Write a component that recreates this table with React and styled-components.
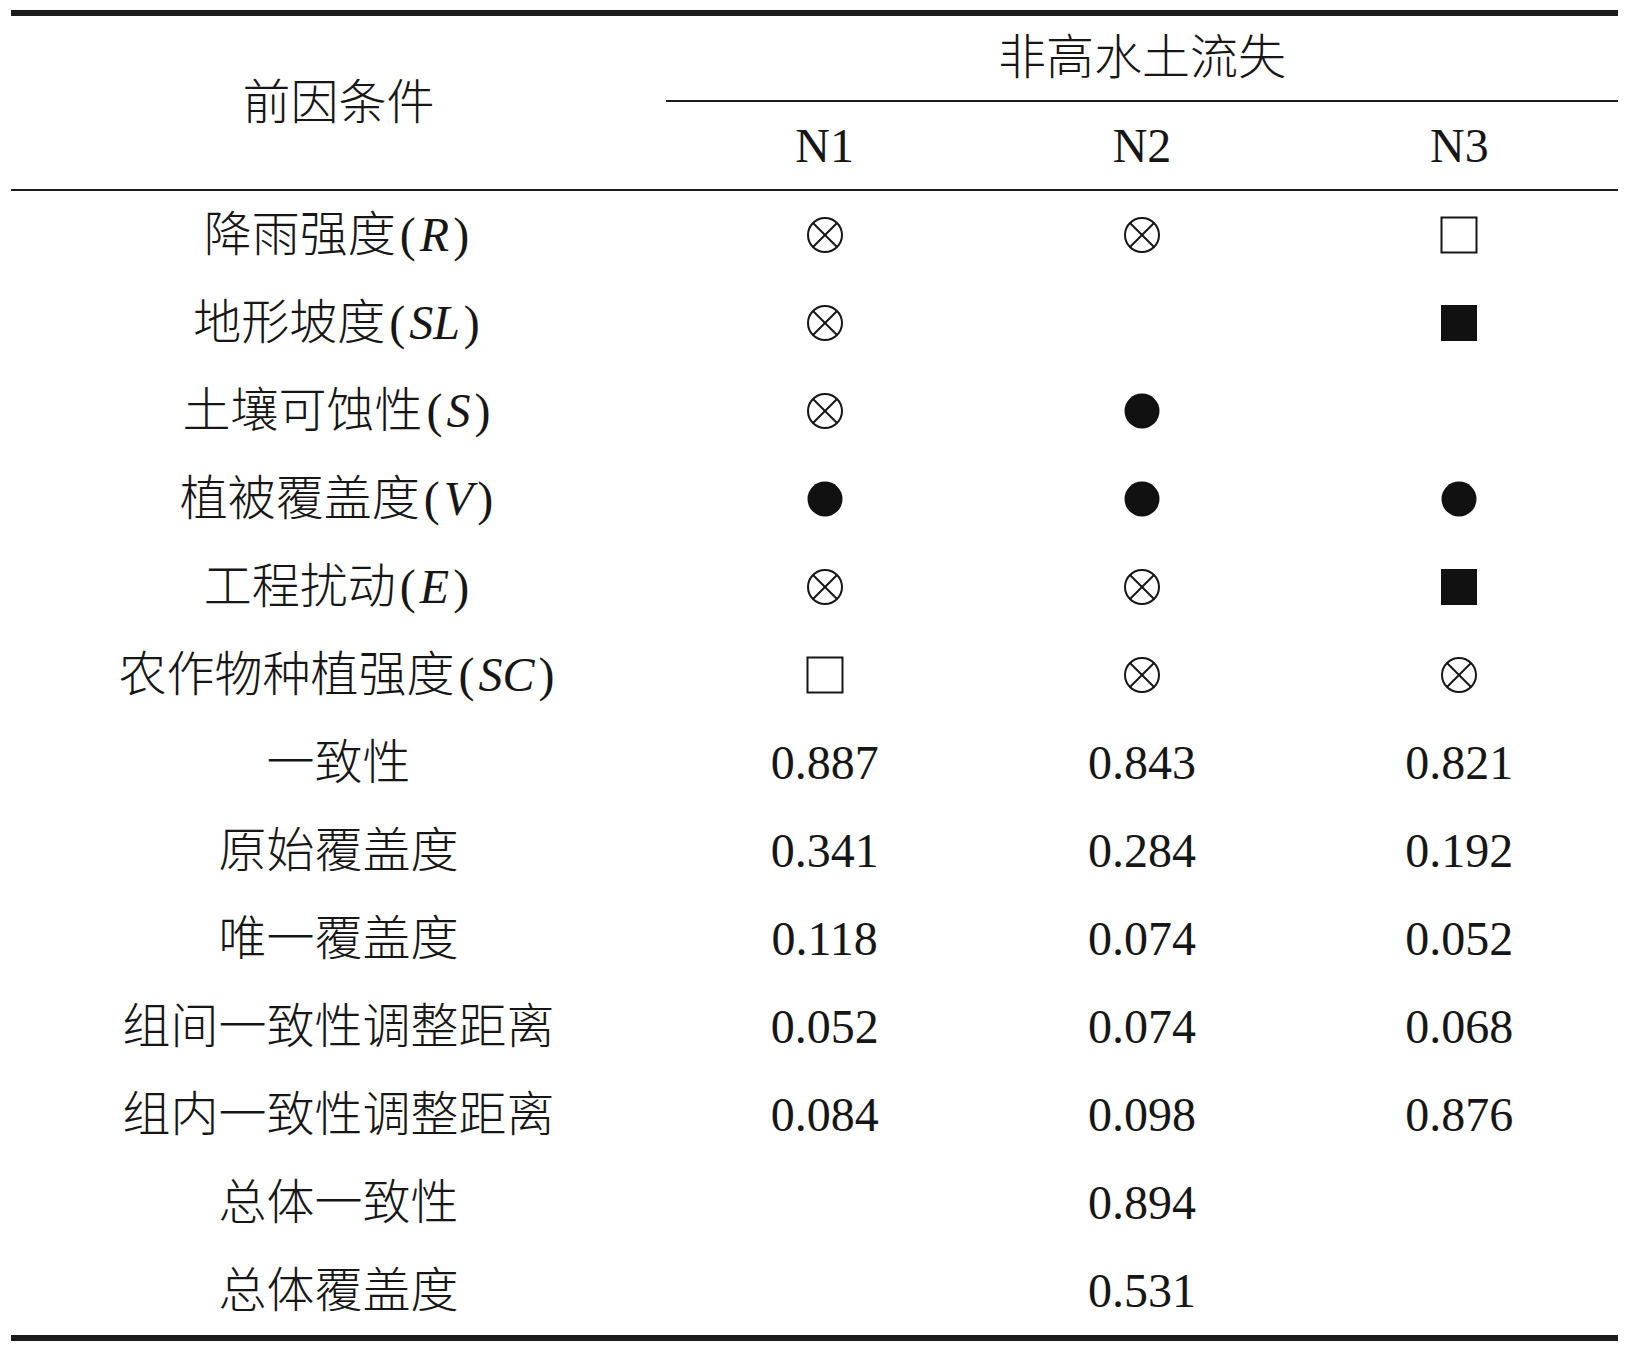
import React from 'react';
import styled, { createGlobalStyle } from 'styled-components';

const GlobalStyle = createGlobalStyle`
  html, body { margin: 0; padding: 0; background: #ffffff; }
  body {
    font-family: "Liberation Serif", "Noto Sans CJK SC", serif;
    color: #161616;
  }
`;

const Page = styled.div`
  padding: 10px 13px 0 11px;
`;

const Table = styled.div`
  display: grid;
  grid-template-columns: 655px repeat(3, 1fr);
  width: 1607px;
  border-top: 6px solid #1c1c1c;
  border-bottom: 6px solid #1c1c1c;
`;

const Cell = styled.div`
  display: flex;
  align-items: center;
  justify-content: center;
  height: 88px;
  font-size: 48px;
  line-height: 1;
  font-weight: 300;
  white-space: nowrap;
`;

const StubHead = styled(Cell)`
  grid-column: 1;
  grid-row: 1 / span 2;
  height: auto;
  border-bottom: 2px solid #1c1c1c;
`;

const GroupHead = styled(Cell)`
  grid-column: 2 / span 3;
  height: 84px;
  border-bottom: 2px solid #1c1c1c;
`;

const CaseHead = styled(Cell)`
  height: 87px;
  font-weight: 400;
  border-bottom: 2px solid #1c1c1c;
`;

const Var = styled.i`
  font-family: "Liberation Serif", serif;
  font-style: italic;
  font-weight: 400;
`;

const Paren = styled.span`
  font-family: "Liberation Serif", serif;
  font-weight: 400;
  padding: 0 4px;
`;

const Num = styled.span`
  font-family: "Liberation Serif", serif;
  font-weight: 400;
`;

const Mark = ({ kind }) => {
  if (kind === 'x') {
    return (
      <svg width="38" height="38" viewBox="0 0 38 38" style={{ display: 'block' }}>
        <circle cx="19" cy="19" r="17" fill="none" stroke="#161616" strokeWidth="2" />
        <line x1="7" y1="7" x2="31" y2="31" stroke="#161616" strokeWidth="2" />
        <line x1="31" y1="7" x2="7" y2="31" stroke="#161616" strokeWidth="2" />
      </svg>
    );
  }
  if (kind === 'dot') {
    return (
      <svg width="38" height="38" viewBox="0 0 38 38" style={{ display: 'block' }}>
        <circle cx="19" cy="19" r="17.5" fill="#111111" />
      </svg>
    );
  }
  if (kind === 'sq') {
    return (
      <svg width="38" height="38" viewBox="0 0 38 38" style={{ display: 'block' }}>
        <rect x="1.5" y="1.5" width="35" height="35" fill="none" stroke="#161616" strokeWidth="2" />
      </svg>
    );
  }
  if (kind === 'fsq') {
    return (
      <svg width="38" height="38" viewBox="0 0 38 38" style={{ display: 'block' }}>
        <rect x="1" y="1" width="36" height="36" fill="#111111" />
      </svg>
    );
  }
  return null;
};

const conditions = [
  { name: '降雨强度', v: 'R', marks: ['x', 'x', 'sq'] },
  { name: '地形坡度', v: 'SL', marks: ['x', null, 'fsq'] },
  { name: '土壤可蚀性', v: 'S', marks: ['x', 'dot', null] },
  { name: '植被覆盖度', v: 'V', marks: ['dot', 'dot', 'dot'] },
  { name: '工程扰动', v: 'E', marks: ['x', 'x', 'fsq'] },
  { name: '农作物种植强度', v: 'SC', marks: ['sq', 'x', 'x'] },
];

const metrics = [
  { name: '一致性', vals: ['0.887', '0.843', '0.821'] },
  { name: '原始覆盖度', vals: ['0.341', '0.284', '0.192'] },
  { name: '唯一覆盖度', vals: ['0.118', '0.074', '0.052'] },
  { name: '组间一致性调整距离', vals: ['0.052', '0.074', '0.068'] },
  { name: '组内一致性调整距离', vals: ['0.084', '0.098', '0.876'] },
  { name: '总体一致性', vals: ['', '0.894', ''] },
  { name: '总体覆盖度', vals: ['', '0.531', ''] },
];

export default function App() {
  return (
    <>
      <GlobalStyle />
      <Page>
        <Table>
          <StubHead>前因条件</StubHead>
          <GroupHead>非高水土流失</GroupHead>
          <CaseHead>N1</CaseHead>
          <CaseHead>N2</CaseHead>
          <CaseHead>N3</CaseHead>

          {conditions.map((c) => (
            <React.Fragment key={c.name}>
              <Cell>
                {c.name}
                <Paren>(</Paren>
                <Var>{c.v}</Var>
                <Paren>)</Paren>
              </Cell>
              {c.marks.map((m, i) => (
                <Cell key={i}>{m && <Mark kind={m} />}</Cell>
              ))}
            </React.Fragment>
          ))}

          {metrics.map((r) => (
            <React.Fragment key={r.name}>
              <Cell>{r.name}</Cell>
              {r.vals.map((v, i) => (
                <Cell key={i}>
                  <Num>{v}</Num>
                </Cell>
              ))}
            </React.Fragment>
          ))}
        </Table>
      </Page>
    </>
  );
}
